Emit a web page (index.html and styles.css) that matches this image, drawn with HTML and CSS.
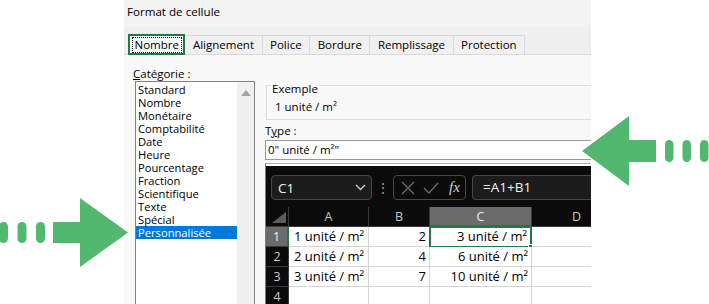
FILE: index.html
```html
<!DOCTYPE html>
<html lang="fr">
<head>
<meta charset="utf-8">
<title>Format de cellule</title>
<link rel="stylesheet" href="styles.css">
</head>
<body>
<div class="stage">
  <div class="dialog">
    <div class="titlebar">Format de cellule</div>
    <div class="tabs">
      <div class="tab active"><span class="focus">Nombre</span></div>
      <div class="tab">Alignement</div>
      <div class="tab">Police</div>
      <div class="tab">Bordure</div>
      <div class="tab">Remplissage</div>
      <div class="tab">Protection</div>
    </div>
    <div class="content">
      <div class="left">
        <div class="label cat-label"><u>C</u>atégorie :</div>
        <div class="listbox">
          <ul class="items">
            <li>Standard</li>
            <li>Nombre</li>
            <li>Monétaire</li>
            <li>Comptabilité</li>
            <li>Date</li>
            <li>Heure</li>
            <li>Pourcentage</li>
            <li>Fraction</li>
            <li>Scientifique</li>
            <li>Texte</li>
            <li>Spécial</li>
            <li class="sel">Personnalisée</li>
          </ul>
          <div class="scroll">
            <svg class="scroll-up" width="10" height="6" viewBox="0 0 10 6"><polygon points="0,6 5,0 10,6" fill="#a3a3a3"/></svg>
          </div>
        </div>
      </div>
      <div class="right">
        <fieldset class="sample">
          <legend>Exemple</legend>
          <div class="sample-val">1 unité / m²</div>
        </fieldset>
        <div class="label type-label">T<u>y</u>pe :</div>
        <div class="typebox">0" unité / m²"</div>
        <div class="dropdown">
          <div class="excel">
            <div class="toolbar">
              <div class="namebox">
                <span class="nb-text">C1</span>
                <svg class="chev" width="11" height="7" viewBox="0 0 11 7"><polyline points="1,1 5.5,5.5 10,1" fill="none" stroke="#d0d0d0" stroke-width="1.3"/></svg>
              </div>
              <div class="dots">⋮</div>
              <div class="fxbox">
                <svg class="fx-x" width="14" height="14" viewBox="0 0 14 14"><path d="M1 1 L13 13 M13 1 L1 13" stroke="#6c6c6c" stroke-width="1.3" fill="none"/></svg>
                <svg class="fx-v" width="16" height="12" viewBox="0 0 16 12"><polyline points="1,6 6,11 15,1" stroke="#6c6c6c" stroke-width="1.3" fill="none"/></svg>
                <span class="fx">fx</span>
              </div>
              <div class="formula">=A1+B1</div>
            </div>
            <div class="grid">
              <div class="hd corner"><svg width="14" height="11" viewBox="0 0 14 11"><polygon points="14,0 14,11 0,11" fill="#5c5c5c"/></svg></div>
              <div class="hd col">A</div>
              <div class="hd col">B</div>
              <div class="hd col colsel">C</div>
              <div class="hd col">D</div>

              <div class="hd row rowsel">1</div>
              <div class="cell">1 unité / m²</div>
              <div class="cell num">2</div>
              <div class="cell num active">3 unité / m²<span class="handle"></span></div>
              <div class="cell"></div>

              <div class="hd row">2</div>
              <div class="cell">2 unité / m²</div>
              <div class="cell num">4</div>
              <div class="cell num">6 unité / m²</div>
              <div class="cell"></div>

              <div class="hd row">3</div>
              <div class="cell">3 unité / m²</div>
              <div class="cell num">7</div>
              <div class="cell num">10 unité / m²</div>
              <div class="cell"></div>

              <div class="hd row">4</div>
              <div class="cell"></div>
              <div class="cell"></div>
              <div class="cell"></div>
              <div class="cell"></div>
            </div>
          </div>
        </div>
      </div>
    </div>
  </div>

  <svg class="arrow arrow-in" width="130" height="70" viewBox="0 0 130 70">
    <rect x="-1" y="24" width="9" height="21" rx="4.5" fill="#52b86f"/>
    <rect x="17.5" y="24" width="9" height="21" rx="4.5" fill="#52b86f"/>
    <rect x="36" y="24" width="9" height="21" rx="4.5" fill="#52b86f"/>
    <polygon points="53,24 80,24 80,0 128,34.5 80,69 80,45 53,45" fill="#52b86f"/>
  </svg>
  <svg class="arrow arrow-out" width="130" height="72" viewBox="0 0 130 72">
    <polygon points="0,35 47,0 47,24 74,24 74,46 47,46 47,70" fill="#52b86f"/>
    <rect x="83" y="24" width="8.5" height="22" rx="4.25" fill="#52b86f"/>
    <rect x="100.5" y="24" width="8.5" height="22" rx="4.25" fill="#52b86f"/>
    <rect x="118" y="24" width="8.5" height="22" rx="4.25" fill="#52b86f"/>
  </svg>
</div>
</body>
</html>
```

FILE: styles.css
```css
* { box-sizing: border-box; }
html, body { margin: 0; padding: 0; background: #ffffff; }
body { width: 709px; height: 304px; overflow: hidden; }

.stage {
  position: relative;
  width: 709px;
  height: 304px;
  overflow: hidden;
  font-family: "Segoe UI", "Open Sans", sans-serif;
  font-size: 11.5px;
  color: #000;
}

.dialog {
  margin-left: 124px;
  width: 467px;
  height: 304px;
  overflow: hidden;
  background: #f9f9f9;
  display: flex;
  flex-direction: column;
}

.titlebar {
  height: 27px;
  background: #f3f3f3;
  padding-left: 3px;
  line-height: 24px;
  font-size: 11.6px;
  white-space: nowrap;
  flex: none;
}

.tabs {
  height: 28px;
  background: #efefef;
  padding-top: 9px;
  padding-left: 4px;
  display: flex;
  align-items: flex-end;
  border-bottom: 1px solid #dadada;
  flex: none;
}

.tab {
  height: 19px;
  border: 1px solid #dadada;
  border-bottom: none;
  margin-left: -1px;
  background: #f0f0f0;
  padding: 0 7.5px;
  line-height: 17px;
  white-space: nowrap;
}

.tab.active {
  height: 21px;
  margin-bottom: -1px;
  background: #f9f9f9;
  padding: 1px 1.5px 0;
  margin-left: 0;
  z-index: 1;
}

.focus {
  display: block;
  border: 1px dotted #111;
  padding: 0 2px;
  line-height: 14px;
}

.content {
  flex: 1;
  display: flex;
  padding-top: 11px;
  min-height: 0;
}

.left {
  width: 141px;
  padding-left: 9px;
  flex: none;
}

.label { white-space: nowrap; line-height: 15px; }

.listbox {
  margin-left: 2px;
  width: 120px;
  height: 240px;
  border: 1px solid #828282;
  background: #fff;
  display: flex;
}

.items {
  list-style: none;
  margin: 0;
  padding: 1px 0 0 0;
  flex: 1;
  font-size: 11.2px;
}

.items li {
  line-height: 13px;
  height: 13px;
  padding-left: 2px;
  white-space: nowrap;
}

.items li.sel {
  background: #0078d7;
  color: #fff;
}

.scroll {
  width: 17px;
  background: #f0f0f0;
  display: flex;
  justify-content: center;
  padding-top: 8px;
}

.scroll-up { display: block; }

.right {
  flex: none;
  width: 340px;
}

.sample {
  margin: 8px 0 0 1px;
  padding: 0 0 0 8px;
  height: 46px;
  border: 1px solid #dcdcdc;
  border-right: none;
}

.sample legend {
  padding: 8px 1px 0;
  margin-left: -4px;
  line-height: 14px;
}

.sample-val {
  line-height: 14px;
  padding-top: 4px;
}

.type-label { margin-top: 3px; }

.typebox {
  margin-top: 2px;
  height: 20px;
  border: 1px solid #9a9a9a;
  border-right: none;
  background: #fff;
  padding-left: 2px;
  line-height: 18px;
  white-space: nowrap;
}

.dropdown {
  margin-top: 3px;
  border-left: 1px solid #7a7a7a;
  border-top: 1px solid #b0b0b0;
  background: #fff;
  padding-top: 2px;
  height: 200px;
}

.excel {
  background: #0b0b0b;
  font-family: "Open Sans", sans-serif;
  height: 200px;
}

.toolbar {
  height: 41px;
  display: flex;
  align-items: center;
  padding-left: 5px;
  padding-top: 2px;
}

.namebox {
  width: 101px;
  height: 25px;
  border: 1px solid #474747;
  border-radius: 4px;
  background: #1c1c1c;
  display: flex;
  align-items: center;
  justify-content: space-between;
  padding: 0 5px 0 6px;
  color: #f2f2f2;
  font-size: 13.5px;
}

.dots {
  width: 21px;
  text-align: center;
  color: #9a9a9a;
  font-size: 14px;
}

.fxbox {
  width: 73px;
  height: 25px;
  border: 1px solid #474747;
  border-radius: 4px;
  display: flex;
  align-items: center;
  padding-left: 7px;
  gap: 8px;
}

.fx {
  font-family: "Liberation Serif", serif;
  font-style: italic;
  color: #cfcfcf;
  font-size: 15px;
  margin-left: 2px;
}

.formula {
  margin-left: 6px;
  flex: 1;
  height: 25px;
  border: 1px solid #474747;
  border-right: none;
  border-radius: 4px 0 0 4px;
  background: #1c1c1c;
  color: #f2f2f2;
  font-size: 13.5px;
  line-height: 23px;
  padding-left: 10px;
}

.grid {
  display: grid;
  grid-template-columns: 23px 80px 61px 102px 90px;
  grid-auto-rows: 20px;
}

.hd {
  background: #0b0b0b;
  color: #c8c8c8;
  font-size: 12.5px;
  display: flex;
  align-items: center;
  justify-content: center;
  border-right: 1px solid #3a3a3a;
  border-bottom: 1px solid #3a3a3a;
}

.corner { align-items: flex-end; justify-content: flex-end; padding: 0 2px 3px 0; }
.corner svg { display: block; }

.colsel { background: #6b6b6b; color: #f0f0f0; border-bottom: 2px solid #1f7a45; }
.rowsel { background: #6b6b6b; color: #f0f0f0; border-right: 2px solid #1f7a45; }

.cell {
  background: #fff;
  border-right: 1px solid #d6d6d6;
  border-bottom: 1px solid #d6d6d6;
  font-size: 13px;
  line-height: 19px;
  padding: 0 3px 0 5px;
  white-space: nowrap;
  color: #000;
  position: relative;
}

.num { text-align: right; }

.active {
  border: 2px solid #1f7a45;
  margin: -1px 0 -1px -1px;
  line-height: 17px;
}

.handle {
  position: absolute;
  right: -4px;
  bottom: -4px;
  width: 6px;
  height: 6px;
  background: #1f7a45;
  border: 1px solid #fff;
}

.arrow { position: absolute; display: block; }
.arrow-in { left: 0; top: 198px; }
.arrow-out { left: 582px; top: 116px; }
```
